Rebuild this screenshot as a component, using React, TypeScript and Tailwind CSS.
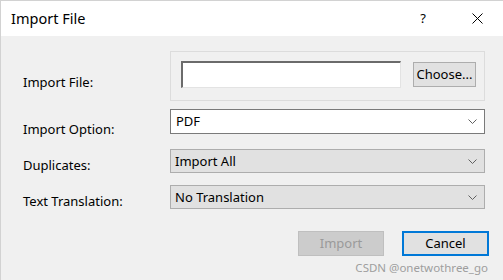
import React from 'react';

const font = { fontFamily: '"Noto Sans", "Open Sans", sans-serif' };

function Chevron() {
  return (
    <svg width="9" height="5" viewBox="0 0 9 5" className="shrink-0">
      <path d="M0.5 0.5 L4.5 4.5 L8.5 0.5" fill="none" stroke="#606060" strokeWidth="1" />
    </svg>
  );
}

function Select({ value, active }: { value: string; active?: boolean }) {
  return (
    <div
      className={
        active
          ? 'w-[315px] h-[25px] flex items-center justify-between pl-[5px] pr-[7px] bg-white border border-[#7a7a7a]'
          : 'w-[315px] h-[24px] flex items-center justify-between pl-[4px] pr-[7px] bg-[#e1e1e1] border border-[#adadad]'
      }
    >
      <span className="text-[13px] text-black leading-none">{value}</span>
      <Chevron />
    </div>
  );
}

function Row({ label, pad, children }: { label: string; pad: string; children: React.ReactNode }) {
  return (
    <div className="flex h-[25px]">
      <label className={`w-[147px] leading-[16px] ${pad}`}>{label}</label>
      {children}
    </div>
  );
}

export default function App() {
  return (
    <div
      className="relative w-[503px] h-[280px] bg-[#f0f0f0] border-t border-l border-[#d2d2d2] overflow-hidden text-black"
      style={font}
    >
      <header className="h-[35px] bg-white flex items-center pl-[10px] pr-[20px]">
        <h1 className="text-[14.5px] leading-none flex-1">Import File</h1>
        <span className="text-[13px] leading-none mr-[46px]">?</span>
        <svg width="11" height="11" viewBox="0 0 11 11">
          <path d="M0.5 0.5 L10.5 10.5 M10.5 0.5 L0.5 10.5" stroke="#000" strokeWidth="1" />
        </svg>
      </header>

      <main className="pl-[22px] text-[13px]">
        <div className="flex mt-[15px]">
          <label className="w-[147px] pt-[23px] leading-[16px]">Import File:</label>
          <div className="w-[315px] h-[50px] border border-[#dcdcdc] flex items-start pl-[10px] pt-[9px]">
            <div className="w-[220px] h-[27px] bg-white border-t-2 border-l-2 border-b border-r border-t-[#6b6b6b] border-l-[#6b6b6b] border-b-[#e3e3e3] border-r-[#e3e3e3]" />
            <button className="ml-[12px] mt-[1px] w-[63px] h-[25px] bg-[#e1e1e1] border border-[#adadad] text-[13px] leading-none">
              Choose...
            </button>
          </div>
        </div>

        <div className="mt-[8px]">
          <Row label="Import Option:" pad="pt-[12px]">
            <Select value="PDF" active />
          </Row>
        </div>

        <div className="mt-[15px]">
          <Row label="Duplicates:" pad="pt-[8px]">
            <Select value="Import All" />
          </Row>
        </div>

        <div className="mt-[11px]">
          <Row label="Text Translation:" pad="pt-[8px]">
            <Select value="No Translation" />
          </Row>
        </div>

        <div className="flex justify-end gap-[18px] mt-[21px] pr-[14px]">
          <button className="w-[86px] h-[25px] bg-[#cccccc] border border-[#bfbfbf] text-[#9a9a9a] text-[13px] leading-none">
            Import
          </button>
          <button className="w-[87px] h-[25px] bg-[#e1e1e1] border-2 border-[#0078d7] text-[13px] leading-none">
            Cancel
          </button>
        </div>
      </main>

      <span className="absolute right-[15px] top-[259px] text-[11.5px] leading-[16px] text-[#9e9e9e]">
        CSDN @onetwothree_go
      </span>
    </div>
  );
}
